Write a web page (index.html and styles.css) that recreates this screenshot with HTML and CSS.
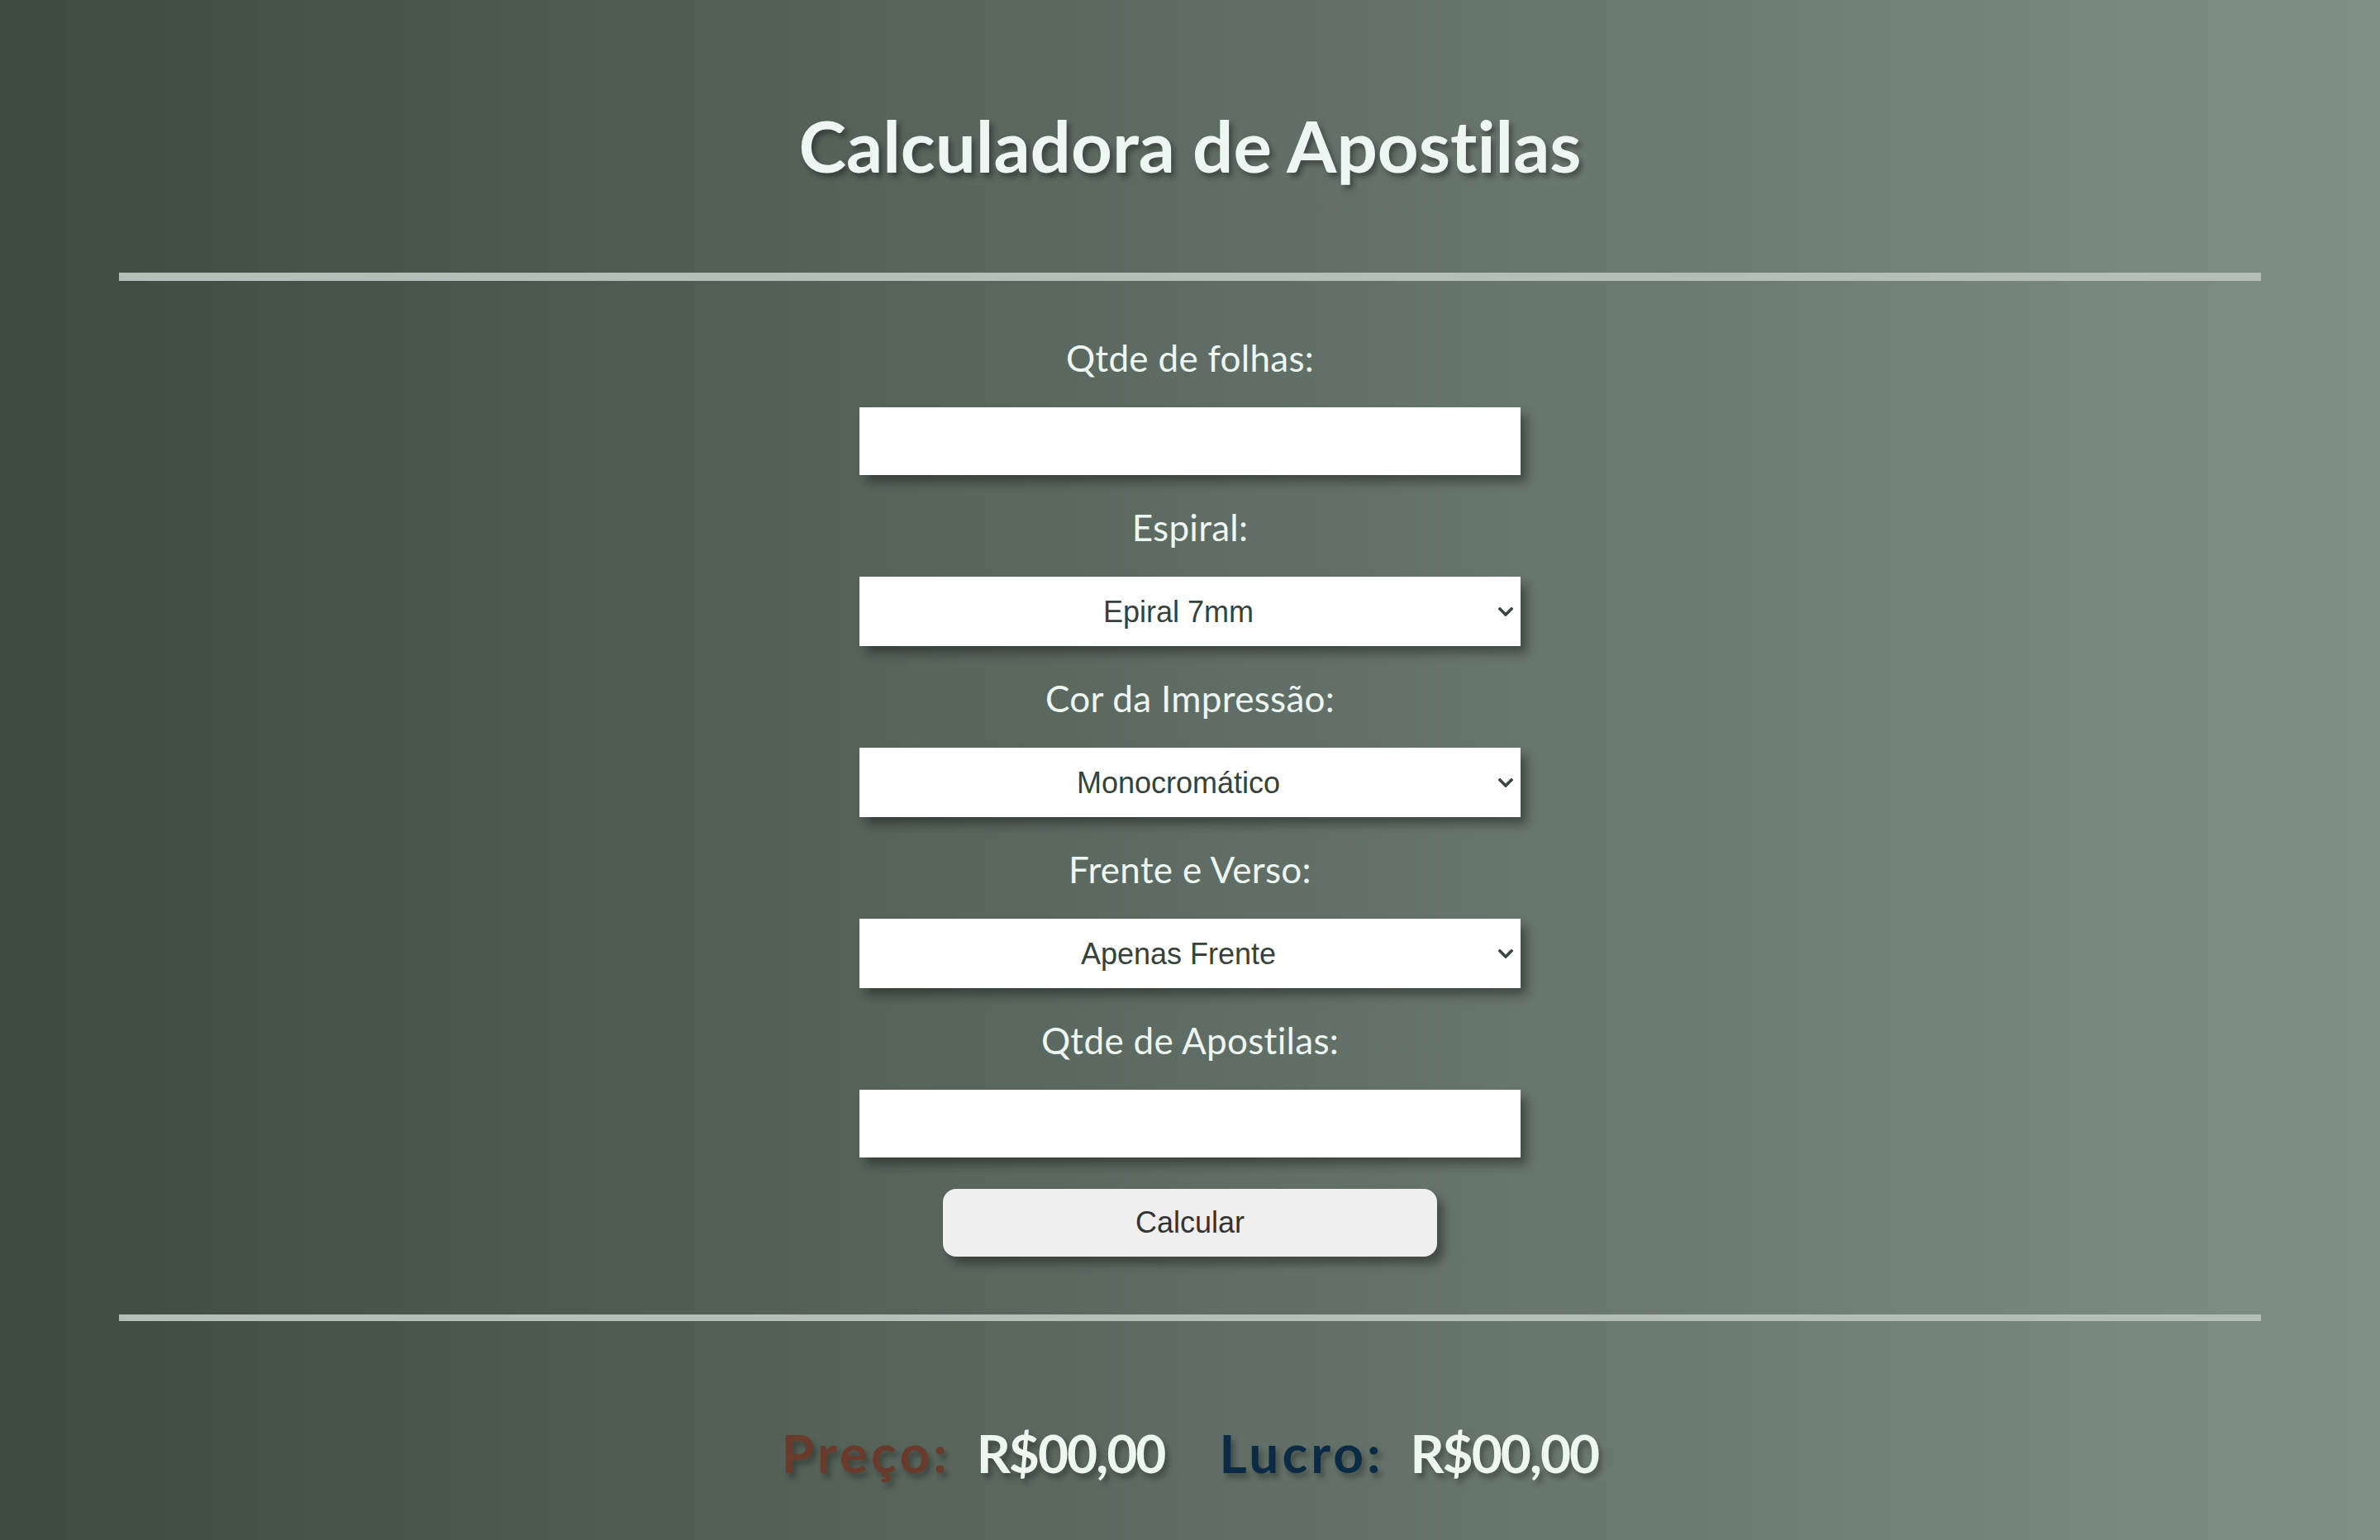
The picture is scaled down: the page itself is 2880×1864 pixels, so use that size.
FILE: index.html
```html
<!DOCTYPE html>
<html lang="pt-BR">
<head>
<meta charset="utf-8">
<title>Calculadora de Apostilas</title>
<link rel="stylesheet" href="styles.css">
</head>
<body>
<main class="page">
  <h1 class="title">Calculadora de Apostilas</h1>
  <hr class="rule rule-top">
  <form class="form">
    <div class="field">
      <label class="label" for="folhas">Qtde de folhas:</label>
      <input class="control" id="folhas" type="text">
    </div>
    <div class="field">
      <label class="label" for="espiral">Espiral:</label>
      <div class="select-wrap">
        <select class="control select" id="espiral">
          <option>Epiral 7mm</option>
        </select>
        <svg class="chevron" viewBox="0 0 18 11" width="18" height="11" aria-hidden="true"><path d="M2 2 L9 9 L16 2" fill="none" stroke="#3a4740" stroke-width="3.6" stroke-linecap="square"/></svg>
      </div>
    </div>
    <div class="field">
      <label class="label" for="cor">Cor da Impressão:</label>
      <div class="select-wrap">
        <select class="control select" id="cor">
          <option>Monocromático</option>
        </select>
        <svg class="chevron" viewBox="0 0 18 11" width="18" height="11" aria-hidden="true"><path d="M2 2 L9 9 L16 2" fill="none" stroke="#3a4740" stroke-width="3.6" stroke-linecap="square"/></svg>
      </div>
    </div>
    <div class="field">
      <label class="label" for="fv">Frente e Verso:</label>
      <div class="select-wrap">
        <select class="control select" id="fv">
          <option>Apenas Frente</option>
        </select>
        <svg class="chevron" viewBox="0 0 18 11" width="18" height="11" aria-hidden="true"><path d="M2 2 L9 9 L16 2" fill="none" stroke="#3a4740" stroke-width="3.6" stroke-linecap="square"/></svg>
      </div>
    </div>
    <div class="field">
      <label class="label" for="apostilas">Qtde de Apostilas:</label>
      <input class="control" id="apostilas" type="text">
    </div>
    <button class="btn" type="button">Calcular</button>
  </form>
  <hr class="rule rule-bottom">
  <div class="results">
    <span class="res-label preco">Preço:</span>
    <span class="res-value first">R$00,00</span>
    <span class="res-label lucro">Lucro:</span>
    <span class="res-value">R$00,00</span>
  </div>
</main>
</body>
</html>
```
FILE: styles.css
```css
html, body {
  margin: 0;
  padding: 0;
}
body {
  min-height: 1864px;
  background: linear-gradient(to right, #3c4a40 0%, #5e6c63 50%, #808f87 100%);
  font-family: Lato, "Open Sans", sans-serif;
  font-variant-ligatures: none;
  color: #eef6f2;
}
.page {
  display: flex;
  flex-direction: column;
  align-items: center;
}
.title {
  margin: 123px 0 0;
  font-size: 87px;
  line-height: 106px;
  font-weight: 700;
  color: #eef6f3;
  text-shadow: 4px 5px 6px rgba(0, 0, 0, 0.35);
}
.rule {
  width: 90%;
  border: 0;
  margin: 0;
  background: #b4bfb9;
}
.rule-top {
  height: 10px;
  margin-top: 101px;
}
.rule-bottom {
  height: 8px;
  margin-top: 70px;
}
.form {
  display: flex;
  flex-direction: column;
  align-items: center;
  margin-top: 30px;
}
.field {
  display: flex;
  flex-direction: column;
  align-items: center;
  margin-top: 33px;
}
.label {
  font-size: 44px;
  line-height: 60px;
  margin-bottom: 30px;
  letter-spacing: 0.3px;
  color: #eef6f2;
}
.control {
  box-sizing: border-box;
  width: 800px;
  height: 82px;
  border: 0;
  border-radius: 0;
  margin: 0;
  background: #fff;
  box-shadow: 8px 9px 11px rgba(0, 0, 0, 0.35);
  font-family: "Liberation Sans", Arial, sans-serif;
  font-size: 36px;
  color: #36423a;
  text-align: center;
  outline: none;
}
.select-wrap {
  position: relative;
  display: flex;
}
.select {
  height: 84px;
  padding: 0 36px 0 8px;
  appearance: none;
  -webkit-appearance: none;
}
.chevron {
  position: absolute;
  right: 9px;
  top: 37px;
  pointer-events: none;
}
.btn {
  box-sizing: border-box;
  width: 598px;
  height: 82px;
  margin-top: 38px;
  border: 0;
  border-radius: 16px;
  background: #efefef;
  box-shadow: 8px 9px 11px rgba(0, 0, 0, 0.35);
  font-family: "Liberation Sans", Arial, sans-serif;
  font-size: 36px;
  color: #333;
}
.results {
  display: flex;
  align-items: baseline;
  margin-top: 120px;
  font-size: 64px;
  line-height: 80px;
  font-weight: 700;
}
.res-label {
  text-shadow: 4px 6px 6px rgba(0, 0, 0, 0.3);
  margin-right: 32px;
  letter-spacing: 4px;
}
.res-value {
  color: #eef6f2;
  letter-spacing: -2px;
  text-shadow: 4px 6px 6px rgba(0, 0, 0, 0.3);
}
.res-value.first {
  margin-right: 66px;
}
.preco {
  color: #6a3a2b;
}
.lucro {
  color: #0b2a44;
}
```
